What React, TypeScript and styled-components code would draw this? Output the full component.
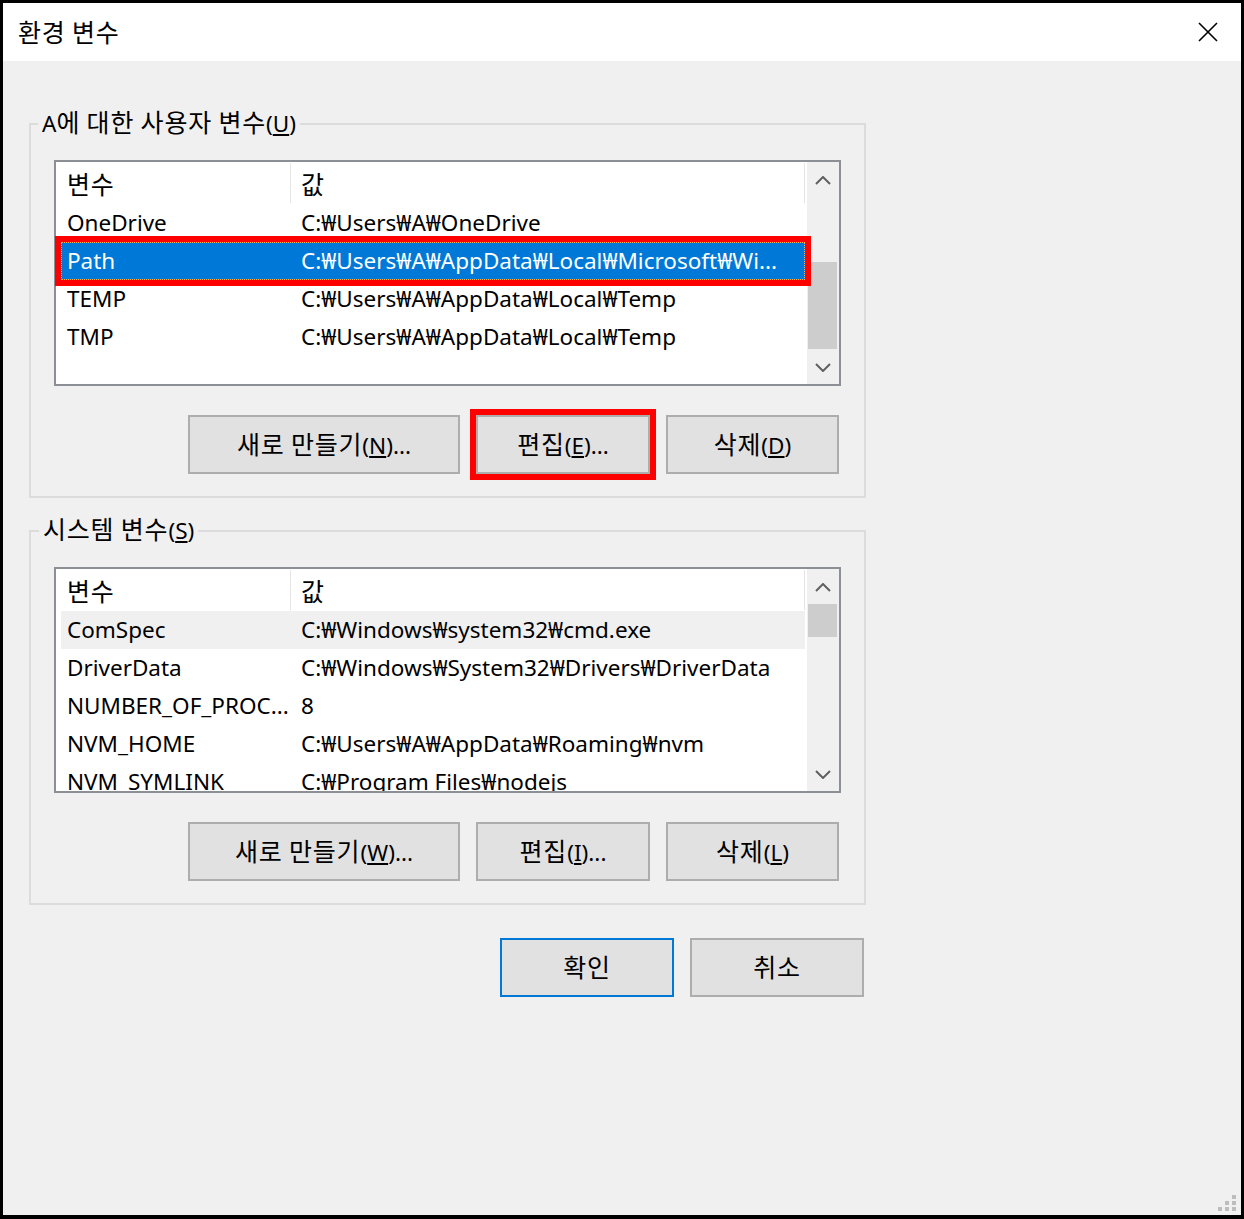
import React from 'react';
import styled, { createGlobalStyle } from 'styled-components';

const FONT = `"Noto Sans", "Noto Sans CJK KR", sans-serif`;

const Global = createGlobalStyle`
  html, body { margin: 0; padding: 0; background: #fff; }
  body { font-family: ${FONT}; }
`;

const Window = styled.div`
  position: relative;
  width: 1244px;
  height: 1219px;
  box-sizing: border-box;
  border: 3px solid #000;
  border-bottom-width: 4px;
  display: flex;
  flex-direction: column;
  background: #f0f0f0;
  font-family: ${FONT};
  font-size: 22.5px;
  color: #000;
`;

/* Hangul run: Malgun Gothic's Hangul is wider than the Latin size suggests */
const K = styled.span`
  font-family: "Noto Sans CJK KR", sans-serif;
  font-size: 25px;
  line-height: 1;
  letter-spacing: 0.8px;
`;

const TitleBar = styled.div`
  height: 58px;
  flex: none;
  background: #fff;
  display: flex;
  align-items: center;
  justify-content: space-between;
  padding: 0 23px 0 15px;
`;

const Title = styled.span`
  line-height: 1;
`;

const Body = styled.div`
  flex: 1;
  display: flex;
  flex-direction: column;
  padding: 48px 0 0 26px;
`;

const Column = styled.div`
  width: 837px;
  display: flex;
  flex-direction: column;
`;

const Group = styled.fieldset<{ $top?: number }>`
  margin: ${p => p.$top ?? 0}px 0 0 0;
  padding: 21px 0 22px 0;
  border: 2px solid #dcdcdc;
  min-width: 0;
`;

const Legend = styled.legend<{ $indent: number }>`
  font-size: 22.5px;
  line-height: 30px;
  height: 30px;
  padding: 0 4px;
  margin-left: ${p => p.$indent}px;
`;

const GroupInner = styled.div`
  padding: 0 23px;
  display: flex;
  flex-direction: column;
`;

const List = styled.div`
  height: 226px;
  box-sizing: border-box;
  border: 2px solid #8c8f94;
  background: #fff;
  display: flex;
`;

const ListContent = styled.div<{ $clip?: boolean }>`
  flex: 1;
  min-width: 0;
  padding: 0 2px 0 5px;
  overflow: ${p => (p.$clip ? 'hidden' : 'visible')};
`;

const HeaderRow = styled.div`
  display: grid;
  grid-template-columns: 230px 1fr;
  height: 42px;
  align-items: stretch;
`;

const HeaderCell = styled.div<{ $pad: number }>`
  display: flex;
  align-items: center;
  padding-left: ${p => p.$pad}px;
  border-right: 1px solid #e5e5e5;
  margin: 1px 0;
`;

const Row = styled.div<{ $state?: 'selected' | 'inactive'; $marked?: boolean }>`
  position: relative;
  display: grid;
  grid-template-columns: 230px 1fr;
  height: 38px;
  line-height: 38px;
  white-space: nowrap;
  background: ${p =>
    p.$state === 'selected' ? '#0078d7' : p.$state === 'inactive' ? '#f0f0f0' : 'transparent'};
  color: ${p => (p.$state === 'selected' ? '#fff' : '#000')};
  ${p =>
    p.$marked &&
    `
    z-index: 1;
    outline: 6px solid #ff0000;
    outline-offset: 0;
    &::after {
      content: '';
      position: absolute;
      inset: 0;
      border: 1px dotted #f2b35c;
    }
  `}
`;

const Cell = styled.div<{ $pad: number }>`
  padding-left: ${p => p.$pad}px;
  overflow: hidden;
`;

const ScrollBar = styled.div`
  width: 32px;
  flex: none;
  background: #f0f0f0;
  display: flex;
  flex-direction: column;
`;

const ScrollBtn = styled.div`
  height: 35px;
  flex: none;
  display: flex;
  align-items: center;
  justify-content: center;
  padding-top: 2px;
  box-sizing: border-box;
`;

const Track = styled.div`
  flex: 1;
  display: flex;
  flex-direction: column;
`;

const Thumb = styled.div<{ $offset: number; $size: number }>`
  margin-top: ${p => p.$offset}px;
  height: ${p => p.$size}px;
  margin-left: 1px;
  width: 29px;
  background: #cdcdcd;
`;

const ButtonRow = styled.div<{ $top: number; $right: number }>`
  display: flex;
  justify-content: flex-end;
  gap: 16px;
  margin-top: ${p => p.$top}px;
  padding-right: ${p => p.$right}px;
`;

const Btn = styled.button<{ $w: number; $primary?: boolean; $marked?: boolean }>`
  width: ${p => p.$w}px;
  height: 59px;
  box-sizing: border-box;
  background: #e1e1e1;
  border: 2px solid ${p => (p.$primary ? '#0078d7' : '#adadad')};
  font-family: ${FONT};
  font-size: 22.5px;
  line-height: 1;
  color: #000;
  padding: 0;
  cursor: default;
  ${p => p.$marked && 'outline: 6px solid #ff0000; outline-offset: 0;'}
`;

const Footer = styled.div`
  margin-top: auto;
  display: flex;
  justify-content: flex-end;
  padding: 0 5px 3px 0;
`;

const Chevron = ({ down }: { down?: boolean }) => (
  <svg width="16" height="9" viewBox="0 0 16 9">
    <polyline
      points={down ? '1,1 8,8 15,1' : '1,8 8,1 15,8'}
      fill="none"
      stroke="#606060"
      strokeWidth="2"
    />
  </svg>
);

const CloseIcon = () => (
  <svg width="20" height="20" viewBox="0 0 20 20">
    <path d="M1 1L19 19M19 1L1 19" stroke="#000" strokeWidth="1.6" />
  </svg>
);

const Grip = () => (
  <svg width="18" height="17" viewBox="0 0 18 17">
    {[
      [14, 0],
      [7, 6],
      [14, 6],
      [0, 12],
      [7, 12],
      [14, 12],
    ].map(([x, y]) => (
      <rect key={`${x}-${y}`} x={x} y={y} width="4" height="4" fill="#bdbdbd" />
    ))}
  </svg>
);

type VarRow = { name: string; value: string; state?: 'selected' | 'inactive'; marked?: boolean };

const userVars: VarRow[] = [
  { name: 'OneDrive', value: 'C:₩Users₩A₩OneDrive' },
  {
    name: 'Path',
    value: 'C:₩Users₩A₩AppData₩Local₩Microsoft₩Wi...',
    state: 'selected',
    marked: true,
  },
  { name: 'TEMP', value: 'C:₩Users₩A₩AppData₩Local₩Temp' },
  { name: 'TMP', value: 'C:₩Users₩A₩AppData₩Local₩Temp' },
];

const systemVars: VarRow[] = [
  { name: 'ComSpec', value: 'C:₩Windows₩system32₩cmd.exe', state: 'inactive' },
  { name: 'DriverData', value: 'C:₩Windows₩System32₩Drivers₩DriverData' },
  { name: 'NUMBER_OF_PROC...', value: '8' },
  { name: 'NVM_HOME', value: 'C:₩Users₩A₩AppData₩Roaming₩nvm' },
  { name: 'NVM_SYMLINK', value: 'C:₩Program Files₩nodejs' },
];

const VarList = ({
  rows,
  clip,
  thumbOffset,
  thumbSize,
}: {
  rows: VarRow[];
  clip?: boolean;
  thumbOffset: number;
  thumbSize: number;
}) => (
  <List>
    <ListContent $clip={clip}>
      <HeaderRow>
        <HeaderCell $pad={6}>
          <K>변수</K>
        </HeaderCell>
        <HeaderCell $pad={10}>
          <K>값</K>
        </HeaderCell>
      </HeaderRow>
      {rows.map(r => (
        <Row key={r.name} $state={r.state} $marked={r.marked}>
          <Cell $pad={6}>{r.name}</Cell>
          <Cell $pad={10}>{r.value}</Cell>
        </Row>
      ))}
    </ListContent>
    <ScrollBar>
      <ScrollBtn>
        <Chevron />
      </ScrollBtn>
      <Track>
        <Thumb $offset={thumbOffset} $size={thumbSize} />
      </Track>
      <ScrollBtn>
        <Chevron down />
      </ScrollBtn>
    </ScrollBar>
  </List>
);

export default function App() {
  return (
    <>
      <Global />
      <Window>
        <TitleBar>
          <Title>
            <K>환경 변수</K>
          </Title>
          <CloseIcon />
        </TitleBar>
        <Body>
          <Column>
            <Group>
              <Legend $indent={7}>
                A<K>에 대한 사용자 변수</K>(<u>U</u>)
              </Legend>
              <GroupInner>
                <VarList rows={userVars} thumbOffset={65} thumbSize={87} />
                <ButtonRow $top={29} $right={2}>
                  <Btn $w={272}>
                    <K>새로 만들기</K>(<u>N</u>)...
                  </Btn>
                  <Btn $w={174} $marked>
                    <K>편집</K>(<u>E</u>)...
                  </Btn>
                  <Btn $w={173}>
                    <K>삭제</K>(<u>D</u>)
                  </Btn>
                </ButtonRow>
              </GroupInner>
            </Group>
            <Group $top={18}>
              <Legend $indent={8}>
                <K>시스템 변수</K>(<u>S</u>)
              </Legend>
              <GroupInner>
                <VarList rows={systemVars} clip thumbOffset={0} thumbSize={33} />
                <ButtonRow $top={29} $right={2}>
                  <Btn $w={272}>
                    <K>새로 만들기</K>(<u>W</u>)...
                  </Btn>
                  <Btn $w={174}>
                    <K>편집</K>(<u>I</u>)...
                  </Btn>
                  <Btn $w={173}>
                    <K>삭제</K>(<u>L</u>)
                  </Btn>
                </ButtonRow>
              </GroupInner>
            </Group>
            <ButtonRow $top={33} $right={2}>
              <Btn $w={174} $primary>
                <K>확인</K>
              </Btn>
              <Btn $w={174}>
                <K>취소</K>
              </Btn>
            </ButtonRow>
          </Column>
          <Footer>
            <Grip />
          </Footer>
        </Body>
      </Window>
    </>
  );
}
